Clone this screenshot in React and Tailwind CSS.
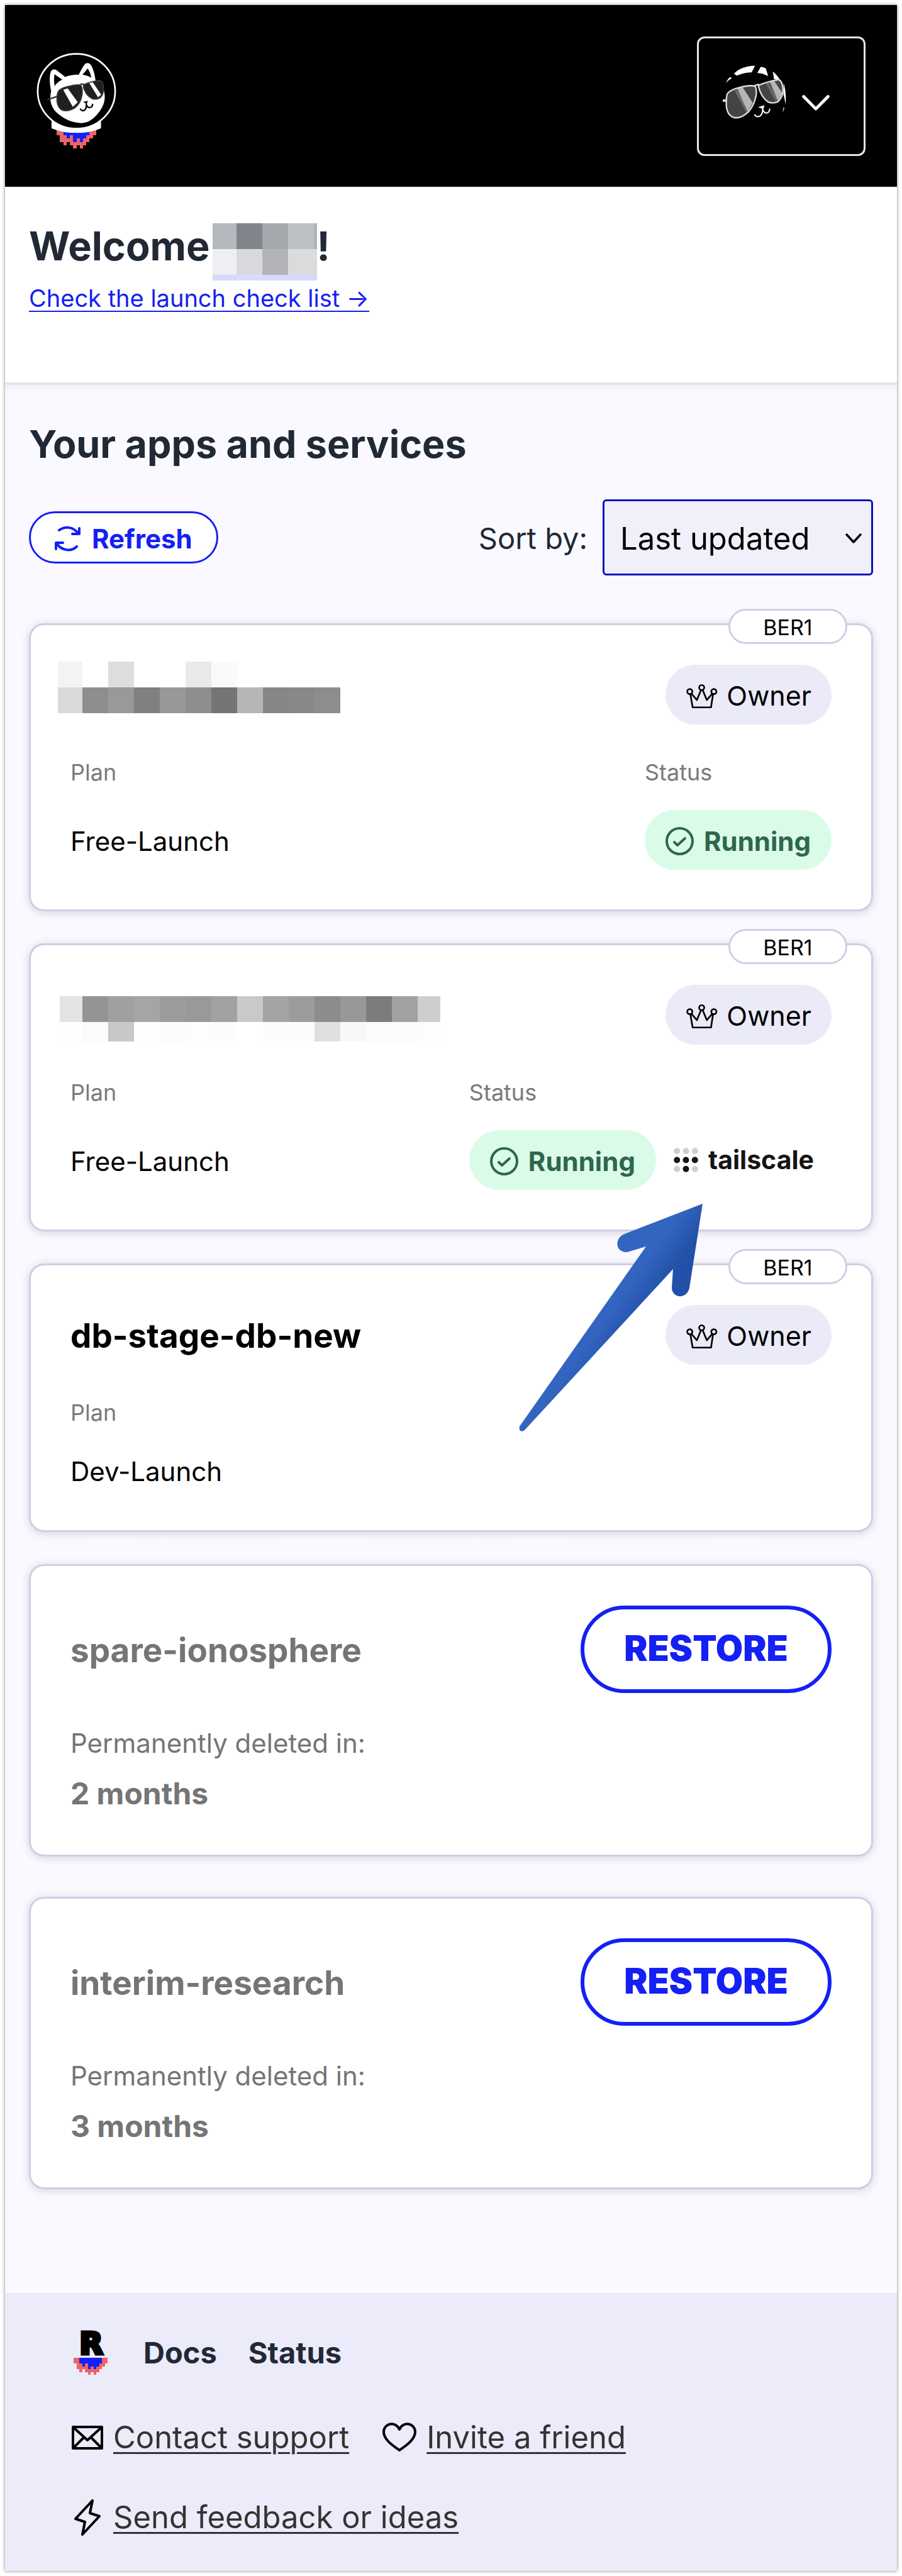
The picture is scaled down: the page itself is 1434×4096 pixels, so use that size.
const FLAME = [
  [0, 0, 2, 2, "#ec6565"], [10, 0, 2, 2, "#ec6565"], [2, 0, 8, 2, "#1420f5"],
  [1, 2, 2, 2, "#ec6565"], [3, 2, 1, 1, "#1420f5"], [3, 3, 2, 1, "#ec6565"], [4, 2, 1, 2, "#ec6565"],
  [5, 2, 4, 1, "#1420f5"], [5, 3, 1, 1, "#1420f5"], [6, 3, 1, 1, "#ec6565"], [7, 3, 1, 1, "#1420f5"],
  [9, 2, 2, 1, "#ec6565"], [8, 3, 2, 1, "#ec6565"],
  [2, 4, 1, 1, "#ec6565"], [4, 4, 5, 1, "#ec6565"], [5, 5, 1, 1, "#ec6565"], [7, 5, 1, 1, "#ec6565"],
];

function Flame() {
  return (
    <g shapeRendering="crispEdges">
      {FLAME.map(([x, y, w, h, fill], i) => (
        <rect key={i} x={x} y={y} width={w} height={h} fill={fill} />
      ))}
    </g>
  );
}

function AstronautLogo() {
  return (
    <svg viewBox="100 82 484 580" className="h-[152px] w-[127px]" aria-hidden="true">
      <g transform="translate(222 542) scale(20)"><Flame /></g>
      <path d="M191 490V540Q255 568 342 568T491 540V490Z" fill="#fff" />
      <ellipse cx="342" cy="315" rx="235" ry="227" fill="#000" stroke="#fff" strokeWidth="10" />
      <path d="M190 320C176 260 178 210 190 190Q205 174 225 190L278 232L270 310Z" fill="#fff" />
      <path d="M355 218C370 185 385 158 398 147Q418 136 433 160C448 190 455 220 458 256L400 250Z" fill="#fff" />
      <path d="M190 312C210 250 280 215 345 215C400 215 440 232 462 250C490 275 515 300 514 352C512 400 490 430 460 465C430 495 405 508 375 508C320 508 270 485 235 455C195 425 172 375 190 312Z" fill="#fff" />
      <path d="M208 212L256 244Q225 260 209 284Q204 245 208 212Z" fill="#000" />
      <path d="M411 176L379 215Q410 220 433 233Q426 200 411 176Z" fill="#000" />
      <path d="M165 367L228 346M364 276Q375 268 388 274" fill="none" stroke="#333" strokeWidth="9" />
      <path d="M226 332Q230 302 280 289Q340 272 366 277Q380 290 377 330Q370 390 330 418Q290 440 258 431Q226 415 224 370Z" fill="#202020" stroke="#383838" strokeWidth="7" />
      <path d="M385 276Q430 256 480 250Q503 254 506 287Q508 330 490 351Q470 368 440 361Q405 345 392 310Q382 290 385 276Z" fill="#202020" stroke="#383838" strokeWidth="7" />
      <path d="M262 306L289 298L350 382L320 410Z" fill="#fff" />
      <path d="M420 265L441 260L492 336L473 352Z" fill="#fff" />
      <path d="M384 379L412 374L404 394Z" fill="#000" />
      <path d="M365 420Q372 438 390 431Q405 420 402 392M402 398Q412 419 428 413Q441 406 440 391" fill="none" stroke="#000" strokeWidth="9" />
    </svg>
  );
}

function Avatar() {
  return (
    <svg viewBox="234 238 386 374" className="h-[98px] w-[101px]" aria-hidden="true">
      <g fill="#fff">
        <path d="M302 288Q345 243 430 240L410 280Q360 282 320 300Z" />
        <path d="M465 246Q480 246 496 256L510 303Q475 285 444 284Z" />
        <path d="M538 275Q562 292 582 326L546 322Z" />
        <path d="M604 345Q622 405 616 475Q608 430 603 415Z" />
        <path d="M254 345Q262 320 280 308L289 315Q270 325 254 345Z" />
        <path d="M448 492L487 479L482 502Z" />
        <path d="M604 490L598 525L608 500Z" />
      </g>
      <rect x="234" y="444" width="24" height="15" fill="#ddd" />
      <path d="M262 410Q280 384 340 371Q400 355 431 365Q441 380 437 420Q425 480 390 520Q345 562 305 555Q262 545 256 485Q254 430 262 410Z" fill="#444" />
      <path d="M322 378L354 369L416 465L386 520Z" fill="#b5b5b5" />
      <path d="M450 360Q500 336 575 324Q598 335 600 385Q600 430 570 458Q540 472 510 460Q465 430 450 360Z" fill="#444" />
      <path d="M520 338L546 330L597 408L570 455Z" fill="#b5b5b5" />
      <path d="M309 388L380 522M316 385L387 517M499 344L559 455M507 342L567 450" stroke="#b5b5b5" strokeWidth="3" />
      <g fill="none" stroke="#ddd" strokeWidth="9">
        <path d="M262 410Q280 384 340 371Q400 355 431 365Q441 380 437 420Q425 480 390 520Q345 562 305 555Q262 545 256 485Q254 430 262 410Z" />
        <path d="M450 360Q500 336 575 324Q598 335 600 385Q600 430 570 458Q540 472 510 460Q465 430 450 360Z" />
        <path d="M425 361L455 352" />
      </g>
      <path d="M427 536Q438 556 460 546Q480 530 476 496M477 508Q490 534 508 525Q520 517 519 500" fill="none" stroke="#fff" strokeWidth="8" />
    </svg>
  );
}

function RefreshIcon() {
  return (
    <svg viewBox="0 0 41 41" className="size-[41px]" fill="none" stroke="currentColor" strokeWidth="4" strokeLinecap="round" strokeLinejoin="round" aria-hidden="true">
      <path d="M7 7C15 1 29 0 38 13M39 4V13H28M35 33C27 41 12 41 3 28M2 37V27H13" />
    </svg>
  );
}

function Crown() {
  return (
    <svg viewBox="818 747 114 89" className="h-10 w-[52px]" fill="none" stroke="currentColor" strokeWidth="6" strokeLinejoin="round" aria-hidden="true">
      <circle cx="832" cy="775" r="9" />
      <circle cx="874" cy="761" r="9" />
      <circle cx="917" cy="775" r="9" />
      <path d="M834 785L842 831H907L914 785M838 783L857 805L871 771M878 771L892 805L911 783" />
    </svg>
  );
}

function CheckIcon() {
  return (
    <svg viewBox="0 0 45 45" className="size-[45px]" fill="none" stroke="currentColor" strokeWidth="4" strokeLinecap="round" strokeLinejoin="round" aria-hidden="true">
      <circle cx="22.5" cy="22.5" r="20.5" />
      <path d="M14 24L19 29L31 18" />
    </svg>
  );
}

function TailscaleDots() {
  const dark = [3, 4, 5, 7];
  return (
    <svg viewBox="0 0 39 39" className="size-[39px]" aria-hidden="true">
      {Array.from({ length: 9 }, (_, i) => (
        <circle key={i} cx={5.2 + (i % 3) * 14.3} cy={5.2 + Math.floor(i / 3) * 14.3} r="5" fill={dark.includes(i) ? "#141414" : "#cfcfcf"} />
      ))}
    </svg>
  );
}

function PointerArrow() {
  return (
    <svg viewBox="824 1910 300 368" className="pointer-events-none absolute top-[407px] right-[261px] z-10 h-[368px] w-[300px]" aria-hidden="true">
      <defs>
        <linearGradient id="arrow" gradientUnits="userSpaceOnUse" x1="1000" y1="2040" x2="1040" y2="2068">
          <stop offset="0" stopColor="#3365c0" />
          <stop offset="1" stopColor="#2350a8" />
        </linearGradient>
      </defs>
      <path d="M1117 1914L993 1962C976 1969 978 1992 997 1991L1027 1982L826 2268C824 2275 829 2278 834 2274L1070 2018L1068 2048C1069 2065 1092 2066 1096 2048Z" fill="url(#arrow)" />
    </svg>
  );
}

function Mosaic({ cols, rows, className }) {
  return (
    <div role="img" aria-label="Hidden name" className={className}>
      {rows.map(({ h, cells }, r) => (
        <div key={r} className="flex" style={{ height: h }}>
          {cells.map((c, i) => (
            <div key={i} className="shrink-0" style={{ width: cols[i], backgroundColor: c }} />
          ))}
        </div>
      ))}
    </div>
  );
}

const nameCols = [38, 41, 41, 41, 5];
const nameRows = [
  { h: 41, cells: ["#b5b8bd", "#80848b", "#a5a9ae", "#bdc0c5", "#b0b3b7"] },
  { h: 41, cells: ["#eeeff2", "#d8d9dc", "#b3b4b9", "#dadbdd", "#dadbdd"] },
  { h: 9, cells: ["#d7d9fc", "#d9dcfb", "#d7d9fa", "#d7d9fa", "#d2d4fc"] },
];
const firstCols = [39, 41, 41, 41, 41, 41, 41, 41, 41, 41, 41];
const firstRows = [
  { h: 41, cells: ["#f3f3f3", "#fff", "#ddd", "#fff", "#fff", "#e9e9e9", "#fafafa", "#fff", "#fff", "#fff", "#fff"] },
  { h: 41, cells: ["#dadada", "#8e8e8e", "#999", "#808080", "#989898", "#8e8e8e", "#757575", "#b6b6b6", "#868686", "#888", "#8d8d8d"] },
];
const secondCols = [36, 41, 41, 41, 41, 41, 41, 41, 41, 41, 41, 41, 41, 41, 36];
const secondRows = [
  { h: 41, cells: ["#e3e3e3", "#949494", "#a0a0a0", "#a5a5a5", "#9c9c9c", "#999", "#a2a2a2", "#c9c9c9", "#a4a4a4", "#9c9c9c", "#8c8c8c", "#989898", "#7c7c7c", "#a2a2a2", "#cecece"] },
  { h: 31, cells: ["#fefefe", "#fbfbfb", "#c8c8c8", "#fdfdfd", "#fbfbfb", "#fdfdfd", "#fcfcfc", "#fff", "#fcfcfc", "#fcfcfc", "#e0e0e0", "#f8f8f8", "#fbfbfb", "#fbfbfb", "#fdfdfd"] },
];

const cardClass =
  "relative rounded-3xl border-3 border-[#d0cee4] bg-white p-[63px] shadow-[0_2px_14px_rgba(40,40,70,0.18)]";

function ServiceCard({ title, plan, running, tailscale, children }) {
  return (
    <li className={cardClass}>
      <span className="absolute -top-[26px] right-[38px] flex h-14 w-[189px] items-center justify-center rounded-full border-3 border-[#d0cee4] bg-white pt-1 text-[34px] leading-none">
        BER1
      </span>
      <div className="flex h-[95px] items-center justify-between">
        {title}
        <span className="flex h-[95px] items-center gap-[13px] rounded-full bg-[#ebeaf8] px-8 pt-1 text-[43px]">
          <Crown />
          Owner
        </span>
      </div>
      <dl className="mt-[52px] flex justify-between">
        <div>
          <dt className="text-4xl leading-12 text-[#7a7a7a]">Plan</dt>
          <dd className={running ? "mt-9 pt-1 text-[42px] leading-[91px]" : "mt-9 pt-1 text-[42px] leading-[60px]"}>{plan}</dd>
        </div>
        {running && (
          <div>
            <dt className="text-4xl leading-12 text-[#7a7a7a]">Status</dt>
            <dd className="mt-9 flex h-[95px] items-center">
              <span className="flex h-[95px] items-center gap-4 rounded-full bg-[#dafbe8] px-[33px] pt-1 text-[42px] font-bold text-[#2f664d]">
                <CheckIcon />
                Running
              </span>
              {tailscale && (
                <span className="flex items-center gap-4 px-7 text-[41px] font-bold text-[#141414]">
                  <TailscaleDots />
                  tailscale
                </span>
              )}
            </dd>
          </div>
        )}
      </dl>
      {children}
    </li>
  );
}

function DeletedCard({ name, left }) {
  return (
    <li className={cardClass}>
      <div className="flex items-center justify-between">
        <h3 className="pt-1 text-[53px] font-bold text-[#757575]">{name}</h3>
        <button type="button" className="flex h-[139px] w-[399px] items-center justify-center rounded-full border-6 border-[#1420f5] bg-white pb-1 text-[56px] font-black text-[#1420f5]">
          RESTORE
        </button>
      </div>
      <p className="mt-[52px] text-[42px] leading-14 text-[#757575]">Permanently deleted in:</p>
      <p className="mt-[18px] text-5xl leading-[68px] font-bold text-[#757575]">{left}</p>
    </li>
  );
}

function FooterLink({ icon, children }) {
  return (
    <a href="#" className="flex h-[57px] items-center gap-4 text-[49px] text-[#333]">
      {icon}
      <span className="underline decoration-3 underline-offset-6">{children}</span>
    </a>
  );
}

export default function App() {
  return (
    <div className="bg-white p-2 font-['Inter',sans-serif] text-black">
      <div className="shadow-[0_0_5px_rgba(0,0,0,0.5)]">
        <header className="flex items-start justify-between bg-black px-[50px] pt-[50px] pb-[49px]">
          <a href="#" aria-label="Home" className="mt-[26px]"><AstronautLogo /></a>
          <button type="button" aria-label="Account menu" className="flex h-[190px] w-[268px] items-center gap-[25px] rounded-xl border-3 border-[#e5e4ee] pl-[38px]">
            <Avatar />
            <svg viewBox="716 346 168 172" className="h-[45px] w-11" fill="none" stroke="#fff" strokeWidth="18" strokeLinecap="round" strokeLinejoin="round" aria-hidden="true">
              <path d="M726 432L800 507L874 432" />
            </svg>
          </button>
        </header>

        <section className="border-b-4 border-[#e5e5ec] bg-white px-[38px] pt-[58px] pb-[106px]">
          <h1 className="flex items-start text-[63px] leading-[72px] font-bold text-[#212936]">
            Welcome
            <Mosaic cols={nameCols} rows={nameRows} className="ml-1" />
            !
          </h1>
          <a href="#" className="text-[38px] leading-14 text-[#1420f5] underline decoration-2 underline-offset-6">
            Check the launch check list →
          </a>
        </section>

        <main className="bg-gradient-to-b from-[#f1f0f6] via-[#faf9ff] via-[12px] to-[#faf9ff] px-[38px] pt-[54px] pb-[165px]">
          <h2 className="text-[61px] leading-20 font-bold text-[#212936]">Your apps and services</h2>
          <div className="mt-12 flex items-center justify-between">
            <button type="button" className="flex h-[83px] items-center gap-[18px] rounded-full border-3 border-[#1420f5] bg-white px-[38px] pt-1 text-[42px] font-bold text-[#1420f5]">
              <RefreshIcon />
              Refresh
            </button>
            <div className="flex items-center gap-6">
              <label htmlFor="sort" className="pt-1 text-[47px] text-[#212936]">Sort by:</label>
              <div className="relative">
                <select id="sort" className="block h-[121px] w-[430px] appearance-none rounded-md border-3 border-[#0a14b8] bg-[#f0f0fb] pt-1 pl-[25px] text-[49px] text-black">
                  <option>Last updated</option>
                </select>
                <svg viewBox="0 0 26 18" className="pointer-events-none absolute top-[53px] right-[18px] h-[18px] w-[26px]" fill="none" stroke="#000" strokeWidth="3.5" strokeLinecap="round" strokeLinejoin="round" aria-hidden="true">
                  <path d="M2 3L13 15L24 3" />
                </svg>
              </div>
            </div>
          </div>

          <ul className="mt-[76px] flex flex-col gap-[51px]">
            <ServiceCard
              title={<Mosaic cols={firstCols} rows={firstRows} className="-mt-6 -ml-5" />}
              plan="Free-Launch"
              running
            />
            <ServiceCard
              title={<Mosaic cols={secondCols} rows={secondRows} className="mt-3 -ml-[17px]" />}
              plan="Free-Launch"
              running
              tailscale
            >
              <PointerArrow />
            </ServiceCard>
            <ServiceCard title={<h3 className="pt-1 text-[53px] font-bold">db-stage-db-new</h3>} plan="Dev-Launch" />
          </ul>
          <ul className="mt-[51px] flex flex-col gap-16">
            <DeletedCard name="spare-ionosphere" left="2 months" />
            <DeletedCard name="interim-research" left="3 months" />
          </ul>
        </main>

        <footer className="bg-[#ebebf9] px-[106px] pt-[60px] pb-[57px]">
          <nav className="flex h-[70px] items-center text-[47px] font-bold text-[#212936]">
            <a href="#" aria-label="Home" className="mr-[57px] ml-[3px]">
              <svg viewBox="0 0 54 70" className="h-[70px] w-[54px] overflow-visible" aria-hidden="true">
                <text x="28" y="37" textAnchor="middle" fontFamily="DejaVu Sans" fontWeight="700" fontSize="48" stroke="#000" strokeWidth="5">R</text>
                <g transform="translate(0 43) scale(4.5)"><Flame /></g>
              </svg>
            </a>
            <a href="#" className="mr-[50px]">Docs</a>
            <a href="#">Status</a>
          </nav>
          <div className="mt-[71px] flex flex-wrap gap-x-[53px] gap-y-[70px]">
            <FooterLink
              icon={
                <svg viewBox="0 0 50 38" className="h-[38px] w-[50px]" fill="none" stroke="#000" strokeWidth="4" strokeLinejoin="round" aria-hidden="true">
                  <path d="M2 2H48V36H2ZM3 3L25 23L47 3M3 35L20 18M47 35L30 18" />
                </svg>
              }
            >
              Contact support
            </FooterLink>
            <FooterLink
              icon={
                <svg viewBox="0 0 54 47" className="h-[47px] w-[54px]" fill="none" stroke="#000" strokeWidth="4" strokeLinejoin="round" aria-hidden="true">
                  <path d="M27 44C17 37 2 27 2 15C2 1 21 -3 27 11C33 -3 52 1 52 15C52 27 37 37 27 44Z" />
                </svg>
              }
            >
              Invite a friend
            </FooterLink>
            <FooterLink
              icon={
                <svg viewBox="-4 0 50 58" className="h-[58px] w-[50px]" fill="none" stroke="#000" strokeWidth="4" strokeLinejoin="round" aria-hidden="true">
                  <path d="M29 2L25 22L40 27L13 56L17 36L2 31Z" />
                </svg>
              }
            >
              Send feedback or ideas
            </FooterLink>
          </div>
        </footer>
      </div>
    </div>
  );
}
